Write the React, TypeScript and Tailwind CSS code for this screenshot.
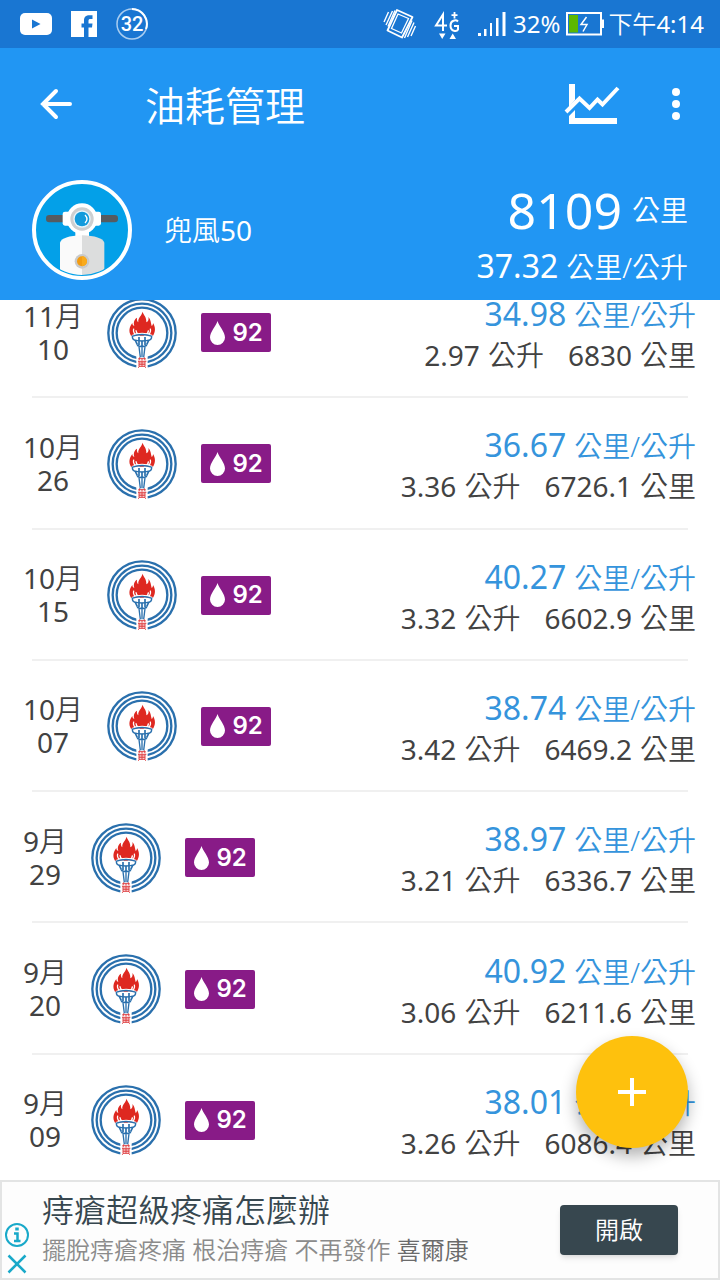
import { Fragment } from "react";

interface FuelRecord {
  month: string;
  day: string;
  economy: string;
  litres: string;
  odometer: string;
}

const records: FuelRecord[] = [
  { month: "11", day: "10", economy: "34.98", litres: "2.97", odometer: "6830" },
  { month: "10", day: "26", economy: "36.67", litres: "3.36", odometer: "6726.1" },
  { month: "10", day: "15", economy: "40.27", litres: "3.32", odometer: "6602.9" },
  { month: "10", day: "07", economy: "38.74", litres: "3.42", odometer: "6469.2" },
  { month: "9", day: "29", economy: "38.97", litres: "3.21", odometer: "6336.7" },
  { month: "9", day: "20", economy: "40.92", litres: "3.06", odometer: "6211.6" },
  { month: "9", day: "09", economy: "38.01", litres: "3.26", odometer: "6086.4" },
];

function StatusBar() {
  return (
    <div className="flex h-12 shrink-0 items-center justify-between bg-[#1976d2] pl-5 pr-4 text-2xl leading-8">
      <div className="flex items-center gap-[19px]">
        <svg width="32" height="24" viewBox="0 0 32 24">
          <rect x="0" y="1" width="32" height="22" rx="5" fill="#fff" />
          <path d="M12 7.500V16.500L20.500 12Z" fill="#1976d2" />
        </svg>
        <svg width="26" height="26" viewBox="0 0 26 26">
          <path
            d="M0 0H26V26H17.500V16.500H21L21.500 12.500H17.500V10C17.500 8.500 18 8 19.500 8H21.500V4.200H18.500C15 4.200 13 6 13 9.500V12.500H10.500V16.500H13V26H0Z"
            fill="#fff"
          />
        </svg>
        <div className="relative flex h-8 w-8 items-center justify-center">
          <svg className="absolute inset-0" width="32" height="32" viewBox="0 0 32 32" fill="none">
            <circle cx="16" cy="16" r="15" stroke="#a9cdf0" strokeWidth="1.500" />
            <path d="M16 1A15 15 0 0 1 30 21" stroke="#fff" strokeWidth="2" />
          </svg>
          <span className="font-[Roboto] text-xl font-medium leading-8">32</span>
        </div>
      </div>
      <div className="flex items-center">
        <svg width="34" height="32" viewBox="0 0 34 32" fill="none" stroke="#fff" strokeWidth="1.400">
          <path d="M14 2L29.500 9L19 29.500L4.500 22.500Z" strokeWidth="1.800" strokeLinejoin="round" />
          <path d="M15 6L25.500 10.500L18.500 25L8.500 20.500Z" strokeWidth="1.300" />
          <path d="M1 14L5.500 4M3 17L9.500 3M5 18.500L12 2.500" />
          <path d="M32.500 18L28 28M31 14.500L24.500 29M29 12.500L21.500 30" />
        </svg>
        <svg className="ml-4" width="28" height="32" viewBox="0 0 28 32" fill="none" stroke="#fff" strokeWidth="2">
          <path d="M10 23V6.500L3 17.500H14" />
          <path d="M25 13.500C23 11.500 17.500 12 17.500 17.500C17.500 24 24 23.500 25 21.500V18H21" />
          <path d="M21.500 4V10.500M18.500 7.200H24.500" strokeWidth="1.800" />
          <path d="M6 25.500H12.500L9.200 31ZM16.500 31H23L19.700 25.500Z" fill="#fff" stroke="none" />
        </svg>
        <svg className="ml-4" width="30" height="26" viewBox="0 0 30 26" fill="#fff">
          <path d="M1 22H4V25H1ZM7 18H9.500V25H7ZM13 12H15V25H13ZM19 7H21.500V25H19ZM25.500 1H28.500V25H25.500Z" />
        </svg>
        <span className="ml-1.5">32%</span>
        <svg className="ml-1.5" width="38" height="24" viewBox="0 0 38 24" fill="none">
          <rect x="1" y="1" width="34" height="21.500" stroke="#fff" strokeWidth="2" />
          <rect x="3" y="3" width="9" height="17.500" fill="#5cb800" />
          <path d="M35 7.500H38V16H35Z" fill="#fff" />
          <path d="M20.500 5L15 12.500H21L17 19.500" stroke="#fff" strokeWidth="1.500" />
        </svg>
        <time className="ml-1">
          <span className="font-[350]">下午</span>4:14
        </time>
      </div>
    </div>
  );
}

function Scooter() {
  return (
    <svg className="shrink-0" width="100" height="100" viewBox="0 0 300 300">
      <defs>
        <clipPath id="badge">
          <circle cx="150" cy="150" r="135" />
        </clipPath>
      </defs>
      <circle cx="150" cy="150" r="144" fill="#03a0e8" stroke="#fff" strokeWidth="12" />
      <rect x="42" y="105" width="216" height="22" rx="10" fill="#555b60" />
      <rect x="92" y="95" width="115" height="42" rx="7" fill="#fff" />
      <path d="M130 145H171V180H130Z" fill="#fff" />
      <circle cx="150" cy="116" r="46" fill="#fff" />
      <circle cx="150" cy="117" r="35" fill="#cdcfd0" />
      <circle cx="150" cy="117" r="26" fill="#e6f5fc" />
      <circle cx="150" cy="117" r="22" fill="#129bdc" />
      <path d="M159 105Q171 117 159 129" fill="none" stroke="#fff" strokeWidth="4" />
      <g clipPath="url(#badge)">
        <path d="M84 300V188Q90 168 150 166V300Z" fill="#fafafa" />
        <path d="M150 300V166Q210 168 217 188V300Z" fill="#dcdddd" />
      </g>
      <circle cx="150" cy="244" r="22" fill="#c9caca" />
      <circle cx="150" cy="244" r="15" fill="#f39c12" />
      <path d="M150 229A15 15 0 0 1 150 259Z" fill="#f9ab1c" />
    </svg>
  );
}

function StationLogo() {
  return (
    <svg className="shrink-0" width="70" height="70" viewBox="0 0 210 210" fill="none">
      <g stroke="#2a70ad">
        <circle cx="105" cy="105" r="101" strokeWidth="7" />
        <circle cx="105" cy="105" r="88" strokeWidth="7" />
        <circle cx="105" cy="105" r="76" strokeWidth="7" />
      </g>
      <path d="M88 160H122V210H88Z" fill="#fff" />
      <path
        d="M106 41C111 52 119 58 118 73C124 70 126 64 124 57C132 65 131 74 134 84C137 82 138 79 138 75C146 88 146 101 138 113H72C64 100 67 87 76 75C76 80 78 83 82 84C78 72 83 63 90 59C89 65 90 69 94 73C92 58 105 54 106 41Z"
        fill="#de2820"
      />
      <path d="M80 92Q76 109 94 111Q87 104 87 97M130 92Q134 109 116 111Q125 104 124 97" stroke="#fff" strokeWidth="4" />
      <path d="M75 113Q105 99 136 113" stroke="#fff" strokeWidth="4" />
      <path d="M74 115Q105 104 136 115M78 124Q105 134 132 124M76 116Q76 124 84 127M134 116Q134 124 126 127" stroke="#2a70ad" strokeWidth="4" />
      <path d="M85 127L91 140M96 117V141M105 128V144M114 117V141M125 127L119 140M90 142Q105 150 120 142" stroke="#2a70ad" strokeWidth="5" />
      <path d="M96 146L100 178M105 148V178M114 146L110 178" stroke="#2a70ad" strokeWidth="4" />
      <g stroke="#df4446" strokeWidth="3">
        <path d="M94 182H116M98 178L96 187M112 178L114 187M105 181V188M93 190H118M96 195H114M96 200H114M96 190V205H114V190M105 190V205M98 205L93 209M112 205L117 209" />
      </g>
    </svg>
  );
}

function FuelBadge() {
  return (
    <span className="flex h-[39px] w-[70px] shrink-0 items-center justify-center gap-1.5 rounded-xs bg-[#881b87] text-white">
      <svg width="17" height="26" viewBox="0 0 17 26">
        <path d="M8.500 1C10 6 16 12 16 17.500A7.500 7.500 0 0 1 1 17.500C1 12 7 6 8.500 1Z" fill="#fff" />
      </svg>
      <span className="font-[Inter] text-2xl font-semibold leading-8">92</span>
    </span>
  );
}

function RecordRow({ record }: { record: FuelRecord }) {
  return (
    <li className="flex flex-1 items-center gap-6 pl-[23px] pr-6">
      <div className="text-center text-[28px] leading-[33px]">
        <p>
          {record.month}
          <span className="font-[350]">月</span>
        </p>
        <p>{record.day}</p>
      </div>
      <StationLogo />
      <FuelBadge />
      <div className="flex flex-1 flex-col items-end pt-1 whitespace-nowrap text-[28px] leading-10">
        <p className="flex items-baseline gap-2 text-[#3594dc]">
          <span className="text-[32px]">{record.economy}</span>
          <span className="font-[350]">公里/公升</span>
        </p>
        <div className="flex gap-6">
          <p className="flex gap-2">
            <span>{record.litres}</span>
            <span className="font-[350]">公升</span>
          </p>
          <p className="flex gap-2">
            <span>{record.odometer}</span>
            <span className="font-[350]">公里</span>
          </p>
        </div>
      </div>
    </li>
  );
}

function AdBanner() {
  return (
    <aside className="flex h-[100px] shrink-0 items-center border-2 border-[#e3e4e4] bg-[#fdfdfd] pl-0.5 pr-10">
      <div className="flex flex-col items-center gap-1.5 self-end pb-1">
        <button aria-label="廣告資訊">
          <svg width="26" height="26" viewBox="0 0 26 26" fill="none" stroke="#19a9c9">
            <circle cx="13" cy="13" r="11" strokeWidth="2" />
            <path d="M13 5.500V8.500" strokeWidth="3.500" />
            <path d="M10 11.500H13.500V19M10 19H16.500" strokeWidth="2.500" />
          </svg>
        </button>
        <button aria-label="關閉廣告">
          <svg width="20" height="20" viewBox="0 0 20 20" stroke="#19a9c9" strokeWidth="2.500">
            <path d="M1.500 1.500L18.500 18.500M18.500 1.500L1.500 18.500" />
          </svg>
        </button>
      </div>
      <div className="ml-3 flex-1 whitespace-nowrap font-[350]">
        <p className="text-[32px] leading-10 text-[#37474f]">痔瘡超級疼痛怎麼辦</p>
        <p className="text-2xl leading-10 text-[#8b8b8b]">
          擺脫痔瘡疼痛 根治痔瘡 不再發作 <span className="text-[#6a6a6a]">喜爾康</span>
        </p>
      </div>
      <button className="h-[50px] w-[118px] rounded-sm bg-[#37474f] text-2xl font-[350] text-white shadow-md">
        開啟
      </button>
    </aside>
  );
}

export default function App() {
  return (
    <div className="flex h-screen flex-col overflow-hidden bg-white font-['Noto_Sans','Noto_Sans_CJK_TC',sans-serif] font-normal text-[#424242]">
      <header className="shrink-0 bg-[#2196f3] text-white">
        <StatusBar />
        <div className="flex h-28 items-center pl-9 pr-6">
          <button aria-label="返回">
            <svg width="40" height="40" viewBox="0 0 40 40" fill="none" stroke="#fff" strokeWidth="4" strokeLinecap="round">
              <path d="M34 20H7M20 7L7 20L20 33" />
            </svg>
          </button>
          <h1 className="ml-[69px] flex-1 pt-1 text-[40px] leading-[48px] font-[350]">油耗管理</h1>
          <button aria-label="圖表">
            <svg width="56" height="42" viewBox="0 0 56 42" fill="none" stroke="#fff">
              <path d="M5 1H11V17L5 24Z" fill="#fff" stroke="none" />
              <path d="M11 27V35H53V41H5V33Z" fill="#fff" stroke="none" />
              <path d="M2 29L15.500 15.500L25.500 25L33.500 16.500L38.500 21.500L54 5" strokeWidth="4" />
            </svg>
          </button>
          <button aria-label="更多選項" className="ml-9">
            <svg width="40" height="40" viewBox="0 0 40 40" fill="#fff">
              <circle cx="20" cy="8" r="4" />
              <circle cx="20" cy="20" r="4" />
              <circle cx="20" cy="32" r="4" />
            </svg>
          </button>
        </div>
        <div className="flex h-[140px] items-center px-8">
          <Scooter />
          <h2 className="ml-8 flex-1 text-[28px] leading-9">
            <span className="font-[350]">兜風</span>50
          </h2>
          <div className="flex flex-col items-end gap-2 pt-2 whitespace-nowrap text-[28px]">
            <p className="flex items-center gap-2.5 leading-[56px]">
              <span className="text-[50px]">8109</span>
              <span className="font-[350]">公里</span>
            </p>
            <p className="flex items-baseline gap-2 leading-10">
              <span className="text-[32px]">37.32</span>
              <span className="font-[350]">公里/公升</span>
            </p>
          </div>
        </div>
      </header>

      <main className="relative flex min-h-0 flex-1 flex-col overflow-hidden">
        {/* list is scrolled part of the way through the first row */}
        <ul className="-mt-[33px] -mb-[6px] flex flex-1 flex-col">
          {records.map((record, key) => (
            <Fragment key={key}>
              {key > 0 && <li aria-hidden className="mx-8 -mt-0.5 h-0.5 bg-[#f0f0f0]" />}
              <RecordRow record={record} />
            </Fragment>
          ))}
        </ul>
        <button
          aria-label="新增紀錄"
          className="absolute right-8 bottom-8 flex h-28 w-28 items-center justify-center rounded-full bg-[#fec10d] shadow-[0_8px_16px_rgba(0,0,0,0.3)]"
        >
          <svg width="28" height="28" viewBox="0 0 28 28" stroke="#fff" strokeWidth="4">
            <path d="M14 0V28M0 14H28" />
          </svg>
        </button>
      </main>

      <AdBanner />
    </div>
  );
}
